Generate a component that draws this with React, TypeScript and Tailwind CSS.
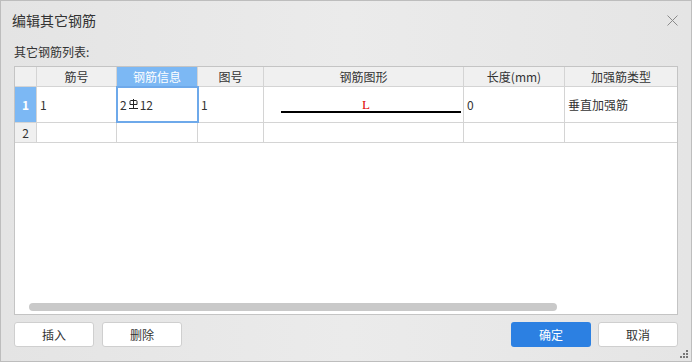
const font = { fontFamily: '"Noto Sans CJK SC", "Noto Sans", sans-serif' };

const columns = [
  { title: "", width: "w-[22px]" },
  { title: "筋号", width: "w-[80px]" },
  { title: "钢筋信息", width: "w-[81px]" },
  { title: "图号", width: "w-[66px]" },
  { title: "钢筋图形", width: "w-[200px]" },
  { title: "长度(mm)", width: "w-[101px]" },
  { title: "加强筋类型", width: "flex-1" },
];

// 三级钢符号
const RebarMark = () => (
  <svg width="11" height="10" viewBox="0 0 11 10" className="mx-[1px] mb-[2px]">
    <path d="M5.5 0 V9" stroke="#222" strokeWidth="1" fill="none" />
    <path d="M2 2.5 Q2 1.5 3 1.5 H8 Q9 1.5 9 2.5 V5.5 H2 Z" stroke="#222" strokeWidth="1" fill="none" />
    <path d="M1 9.5 H10" stroke="#222" strokeWidth="1" fill="none" />
  </svg>
);

const Button = ({ label, primary }: { label: string; primary?: boolean }) => (
  <button
    className={
      primary
        ? "w-[80px] h-[25px] rounded-[3px] bg-[#2c80e2] text-white text-[12px]"
        : "w-[80px] h-[25px] rounded-[3px] bg-white border border-[#cfcfcf] text-[#333] text-[12px]"
    }
  >
    {label}
  </button>
);

const App = () => {
  return (
    <div
      style={font}
      className="relative w-[692px] h-[362px] border border-[#bdbdbd] bg-gradient-to-r from-[#e4e4e4] via-[#ebebeb] to-[#e5e5e5] text-[#333] overflow-hidden"
    >
      <div className="h-[39px] flex items-center justify-between pl-[11px] pr-[12px]">
        <span className="text-[14px] text-[#333]">编辑其它钢筋</span>
        <svg width="11" height="11" viewBox="0 0 11 11" className="mr-[1px]">
          <path d="M0.5 0.5 L10.5 10.5 M10.5 0.5 L0.5 10.5" stroke="#8a8a8a" strokeWidth="1" fill="none" />
        </svg>
      </div>

      <div className="h-[26px] pl-[13px] text-[12px] leading-[24px]">其它钢筋列表:</div>

      <div className="mx-[13px] h-[249px] border border-[#c4c4c4] bg-white flex flex-col text-[12px]">
        {/* header */}
        <div className="flex h-[20px] bg-[#f0f0f0] border-b border-[#d4d4d4]">
          {columns.map((c, i) => (
            <div
              key={i}
              className={`${c.width} ${i === 2 ? "bg-[#7cb8f4] text-white" : "text-[#333]"} ${
                i < columns.length - 1 ? "border-r border-[#d4d4d4]" : ""
              } flex items-center justify-center leading-none`}
            >
              {c.title}
            </div>
          ))}
        </div>

        {/* row 1 */}
        <div className="flex h-[36px] border-b border-[#d4d4d4]">
          <div className="w-[22px] bg-[#7cb8f4] text-white font-bold border-r border-[#d4d4d4] flex items-center justify-center">
            1
          </div>
          <div className="w-[80px] border-r border-[#d4d4d4] flex items-center pl-[3px]">1</div>
          <div className="w-[81px] border-r border-[#d4d4d4] flex items-center pl-[3px] outline-2 outline-[#6ea9ea] -outline-offset-1 relative">
            2<RebarMark />12
          </div>
          <div className="w-[66px] border-r border-[#d4d4d4] flex items-center pl-[3px]">1</div>
          <div className="w-[200px] border-r border-[#d4d4d4] flex flex-col items-center justify-end pb-[9px] pl-[14px]">
            <span
              className="self-start ml-[84px] text-[13px] leading-[11px] text-[#e00000]"
              style={{ fontFamily: '"Liberation Serif", serif' }}
            >
              L
            </span>
            <div className="w-[180px] h-[2px] bg-black mt-[1px]" />
          </div>
          <div className="w-[101px] border-r border-[#d4d4d4] flex items-center pl-[3px]">0</div>
          <div className="flex-1 flex items-center pl-[3px]">垂直加强筋</div>
        </div>

        {/* row 2 */}
        <div className="flex h-[20px] border-b border-[#d4d4d4]">
          {columns.map((c, i) => (
            <div
              key={i}
              className={`${c.width} ${i === 0 ? "bg-[#f0f0f0] flex items-center justify-center" : ""} ${
                i < columns.length - 1 ? "border-r border-[#d4d4d4]" : ""
              }`}
            >
              {i === 0 ? "2" : ""}
            </div>
          ))}
        </div>

        <div className="flex-1" />
        {/* horizontal scrollbar */}
        <div className="h-[8px] w-[528px] ml-[14px] mb-[3px] rounded-full bg-[#c9c9c9]" />
      </div>

      <div className="flex items-center justify-between mx-[13px] mt-[7px]">
        <div className="flex gap-[8px]">
          <Button label="插入" />
          <Button label="删除" />
        </div>
        <div className="flex gap-[7px]">
          <Button label="确定" primary />
          <Button label="取消" />
        </div>
      </div>

      {/* resize grip */}
      <svg width="8" height="8" viewBox="0 0 8 8" className="absolute right-[3px] bottom-[3px]">
        <rect x="6" y="0" width="2" height="2" fill="#777" />
        <rect x="3" y="3" width="2" height="2" fill="#777" />
        <rect x="6" y="3" width="2" height="2" fill="#777" />
        <rect x="0" y="6" width="2" height="2" fill="#777" />
        <rect x="3" y="6" width="2" height="2" fill="#777" />
        <rect x="6" y="6" width="2" height="2" fill="#777" />
      </svg>
    </div>
  );
};

export default App;
